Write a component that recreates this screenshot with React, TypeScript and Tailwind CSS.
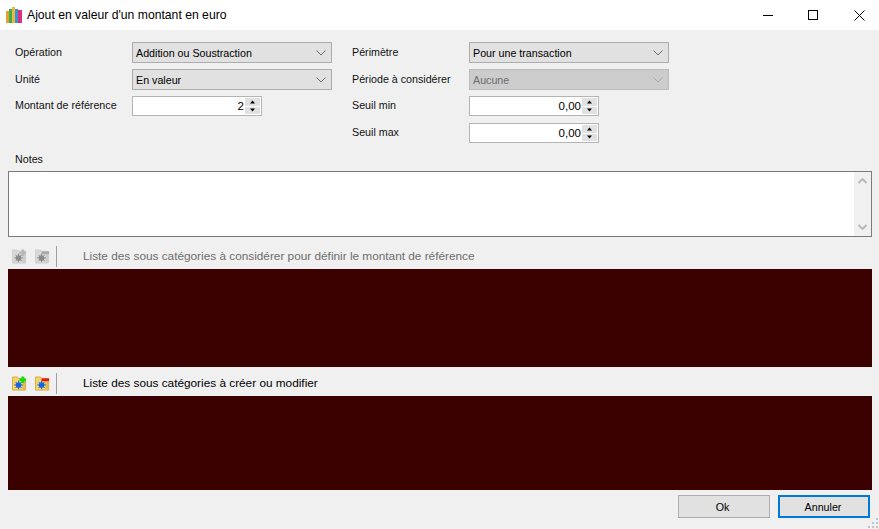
const font = { fontFamily: '"Liberation Sans", Arial, sans-serif' };

function Chevron({ color = "#6a6a6a" }: { color?: string }) {
  return (
    <svg width="10" height="6" viewBox="0 0 10 6" className="shrink-0">
      <path d="M0.5 0.5 L5 5 L9.5 0.5" fill="none" stroke={color} strokeWidth="1" />
    </svg>
  );
}

function Select({ value, disabled }: { value: string; disabled?: boolean }) {
  return (
    <div
      className={
        disabled
          ? "w-[200px] h-[21px] flex items-center justify-between pl-[3px] pr-[5px] border border-[#bcbcbc] bg-[#cccccc] text-[#6d6d6d]"
          : "w-[200px] h-[21px] flex items-center justify-between pl-[3px] pr-[5px] border border-[#adadad] bg-[#e1e1e1] text-black"
      }
    >
      <span className="mt-px">{value}</span>
      <Chevron color={disabled ? "#a8a8a8" : "#6a6a6a"} />
    </div>
  );
}

function Spin({ value, width }: { value: string; width: string }) {
  return (
    <div className={`${width} h-[20px] flex border border-[#b4b4b4] bg-white p-px`}>
      <div className="flex-1 text-right leading-[16px] pr-px text-[11.5px] text-black">{value}</div>
      <div className="w-[15px] flex flex-col gap-px">
        <div className="flex-1 bg-[#e1e1e1] flex items-center justify-center">
          <svg width="7" height="4" viewBox="0 0 7 4"><path d="M3.5 0.5 L6 3.5 H1 Z" fill="#000" /></svg>
        </div>
        <div className="flex-1 bg-[#e1e1e1] flex items-center justify-center">
          <svg width="7" height="4" viewBox="0 0 7 4"><path d="M1 0.5 H6 L3.5 3.5 Z" fill="#000" /></svg>
        </div>
      </div>
    </div>
  );
}

function Row({ label, children }: { label: string; children: React.ReactNode }) {
  return (
    <div className="flex items-center">
      <span className="w-[117px] shrink-0 text-[#111] -mt-[1px]">{label}</span>
      {children}
    </div>
  );
}

function Gear({ cx, cy, color }: { cx: number; cy: number; color: string }) {
  return (
    <>
      <circle cx={cx} cy={cy} r="3" fill={color} />
      <path
        d={`M${cx} ${cy - 4.5} V${cy + 4.5} M${cx - 4.5} ${cy} H${cx + 4.5} M${cx - 3.2} ${cy - 3.2} L${cx + 3.2} ${cy + 3.2} M${cx + 3.2} ${cy - 3.2} L${cx - 3.2} ${cy + 3.2}`}
        stroke={color}
        strokeWidth="1"
      />
    </>
  );
}

function FolderAdd({ muted }: { muted?: boolean }) {
  return (
    <svg width="16" height="16" viewBox="0 0 16 16">
      <path d="M0.5 0.5 H6 L7 2 H14.5 V14.5 H0.5 Z" fill={muted ? "#d8d8d8" : "#f4d469"} stroke={muted ? "#cfcfcf" : "#d2ac45"} strokeWidth="1" />
      <rect x="11" y="3" width="3" height="11" fill={muted ? "#cccccc" : "#e6bb52"} />
      <Gear cx={7} cy={9} color={muted ? "#8a8a8a" : "#1464e6"} />
      <path d="M10 0 H13 V2 H15 V5 H13 V7 H10 V5 H8 V2 H10 Z" fill={muted ? "#b8b8b8" : "#14dc14"} />
    </svg>
  );
}

function FolderEdit({ muted }: { muted?: boolean }) {
  return (
    <svg width="16" height="16" viewBox="0 0 16 16">
      <path d="M0.5 0.5 H6 L7 2 H14.5 V14.5 H0.5 Z" fill={muted ? "#d8d8d8" : "#f4d469"} stroke={muted ? "#cfcfcf" : "#d2ac45"} strokeWidth="1" />
      <rect x="11" y="5" width="3" height="9" fill={muted ? "#cccccc" : "#e6bb52"} />
      <Gear cx={7} cy={9} color={muted ? "#8a8a8a" : "#1464e6"} />
      <rect x="7" y="2" width="8" height="3" fill={muted ? "#a9a9a9" : "#e8141c"} />
    </svg>
  );
}

function Toolbar({ label, muted }: { label: string; muted?: boolean }) {
  return (
    <div className="h-[23px] flex items-center">
      <div className="w-[8px]" />
      <div className="w-[15px] ml-[4px] flex items-center"><FolderAdd muted={muted} /></div>
      <div className="w-[15px] ml-[8px] flex items-center"><FolderEdit muted={muted} /></div>
      <div className="w-px h-[21px] bg-[#a0a0a0] ml-[6px]" />
      <span className={muted ? "ml-[26px] text-[11.8px] text-[#6d6d6d]" : "ml-[26px] text-[11.8px] text-black"}>{label}</span>
    </div>
  );
}

export default function App() {
  return (
    <div style={font} className="w-[879px] h-[529px] bg-[#f0f0f0] flex flex-col text-[10.7px] overflow-hidden relative">
      {/* title bar */}
      <div className="h-[30px] bg-white flex items-center shrink-0">
        <svg width="16" height="16" viewBox="0 0 16 16" className="ml-[6px] shrink-0">
          <rect x="0" y="4" width="3" height="12" fill="#e8a030" />
          <rect x="3" y="2" width="3" height="14" fill="#3fae4a" />
          <rect x="6" y="0" width="3" height="16" fill="#e9b93a" />
          <rect x="9" y="2" width="3" height="14" fill="#3a8fd8" />
          <rect x="12" y="3" width="4" height="13" fill="#d8327e" />
        </svg>
        <span className="ml-[5px] text-[12.2px] text-black">Ajout en valeur d'un montant en euro</span>
        <div className="ml-auto flex items-center">
          <div className="w-[38px] flex justify-center">
            <svg width="10" height="10" viewBox="0 0 10 10"><path d="M0 5.5 H10" stroke="#000" strokeWidth="1" /></svg>
          </div>
          <div className="w-[52px] flex justify-center">
            <svg width="10" height="10" viewBox="0 0 10 10"><rect x="0.5" y="0.5" width="9" height="9" fill="none" stroke="#000" strokeWidth="1" /></svg>
          </div>
          <div className="w-[40px] flex justify-center">
            <svg width="11" height="11" viewBox="0 0 11 11"><path d="M0.5 0.5 L10.5 10.5 M10.5 0.5 L0.5 10.5" stroke="#000" strokeWidth="1" /></svg>
          </div>
        </div>
      </div>

      {/* form */}
      <div className="pt-[12px] pl-[15px] flex shrink-0 h-[113px]">
        <div className="w-[337px] flex flex-col gap-[6px]">
          <Row label="Opération"><Select value="Addition ou Soustraction" /></Row>
          <Row label="Unité"><Select value="En valeur" /></Row>
          <Row label="Montant de référence"><Spin value="2" width="w-[130px]" /></Row>
        </div>
        <div className="flex flex-col gap-[6px]">
          <Row label="Périmètre"><Select value="Pour une transaction" /></Row>
          <Row label="Période à considérer"><Select value="Aucune" disabled /></Row>
          <Row label="Seuil min"><Spin value="0,00" width="w-[130px]" /></Row>
          <div className="mt-[1px]"><Row label="Seuil max"><Spin value="0,00" width="w-[130px]" /></Row></div>
        </div>
      </div>

      {/* notes */}
      <div className="pl-[15px] h-[28px] flex items-start pt-[10px] leading-[13px] text-[#111] shrink-0">Notes</div>
      <div className="mx-[7px] ml-[8px] h-[66px] shrink-0 border border-[#7a7a7a] bg-white flex justify-end">
        <div className="w-[17px] bg-[#f0f0f0] flex flex-col items-center justify-between py-[6px]">
          <svg width="9" height="6" viewBox="0 0 9 6"><path d="M0.5 5 L4.5 1 L8.5 5" fill="none" stroke="#b9b9b9" strokeWidth="2" /></svg>
          <svg width="9" height="6" viewBox="0 0 9 6"><path d="M0.5 1 L4.5 5 L8.5 1" fill="none" stroke="#b9b9b9" strokeWidth="2" /></svg>
        </div>
      </div>

      {/* first list */}
      <div className="mt-[8px] shrink-0"><Toolbar muted label="Liste des sous catégories à considérer pour définir le montant de référence" /></div>
      <div className="mt-px ml-[8px] mr-[7px] h-[98px] bg-[#3b0000] shrink-0" />

      {/* second list */}
      <div className="mt-[5px] shrink-0"><Toolbar label="Liste des sous catégories à créer ou modifier" /></div>
      <div className="mt-px ml-[8px] mr-[7px] h-[94px] bg-[#3b0000] shrink-0" />

      {/* buttons */}
      <div className="mt-[5px] flex justify-end gap-[8px] pr-[9px] shrink-0">
        <button className="w-[92px] h-[23px] border border-[#adadad] bg-[#e1e1e1] text-black pt-px pr-[3px]">Ok</button>
        <button className="w-[92px] h-[23px] border-2 border-[#0078d7] bg-[#e1e1e1] text-black pt-px pr-[2px]">Annuler</button>
      </div>

      {/* size grip */}
      <svg width="12" height="12" viewBox="0 0 12 12" className="absolute right-0 bottom-0">
        <path d="M9 1h2v2H9zM5 5h2v2H5zM9 5h2v2H9zM1 9h2v2H1zM5 9h2v2H5zM9 9h2v2H9z" fill="#c4c4c4" />
      </svg>
    </div>
  );
}
